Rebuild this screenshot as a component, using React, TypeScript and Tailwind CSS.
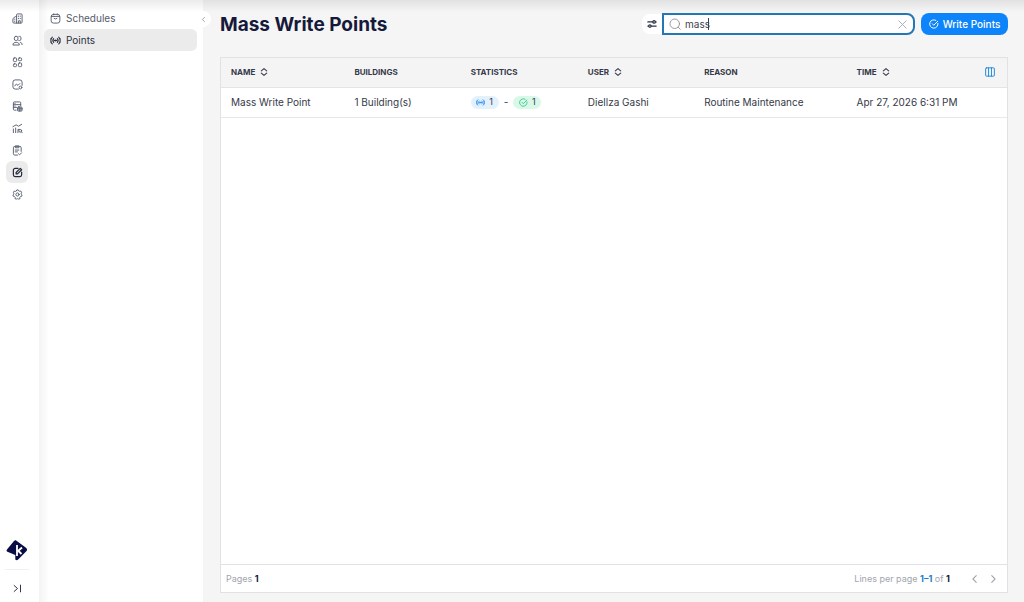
import { useState } from "react";
import type { ReactNode } from "react";

const Icon = ({
  children,
  className = "size-3",
  width = 1.8,
}: {
  children: ReactNode;
  className?: string;
  width?: number;
}) => (
  <svg
    viewBox="0 0 24 24"
    fill="none"
    stroke="currentColor"
    strokeWidth={width}
    strokeLinecap="round"
    strokeLinejoin="round"
    className={`shrink-0 ${className}`}
    aria-hidden="true"
  >
    {children}
  </svg>
);

const SignalIcon = ({ className }: { className?: string }) => (
  <Icon className={className} width={2.4}>
    <path d="M5 4.500a10.500 10.500 0 0 0 0 15M19 4.500a10.500 10.500 0 0 1 0 15M8 8a6 6 0 0 0 0 8M16 8a6 6 0 0 1 0 8M2 8v8M22 8v8" />
    <path d="M9 12h6" />
    <circle cx="12" cy="12" r="1.2" fill="currentColor" />
  </Icon>
);

const CheckIcon = ({ className }: { className?: string }) => (
  <Icon className={className} width={2.4}>
    <path d="M21.500 10.500A10 10 0 1 1 16.500 3.200" />
    <path d="m8 11.500 3.500 3.500L21 5.500" />
  </Icon>
);

const SortIcon = () => (
  <Icon className="size-2" width={3.4}>
    <path d="M4 8.500 12 2l8 6.500M4 15.500 12 22l8-6.500" />
  </Icon>
);

const navItems = [
  {
    label: "Buildings",
    icon: (
      <>
        <path d="M10 22V4a2 2 0 0 1 2-2h8a2 2 0 0 1 2 2v16a2 2 0 0 1-2 2H4a2 2 0 0 1-2-2v-7a2 2 0 0 1 1-1.700L7 8h3" />
        <path d="M14 6.500v1M18 6.500v1M14 11.500v1M18 11.500v1M6 13v1M6 17.500v1M14 22v-5h4v5" />
      </>
    ),
  },
  {
    label: "Users",
    icon: (
      <>
        <rect x="5" y="3" width="8" height="9" rx="3.500" />
        <path d="M15 3h1.500a3 3 0 0 1 3 3v3a3 3 0 0 1-3 3H15M2 21c0-3 3-5 7-5s7 2 7 5zM18 16c2.500.500 4 2 4 5" />
      </>
    ),
  },
  {
    label: "Equipment",
    icon: (
      <>
        <rect x="3" y="2" width="7" height="8" rx="2" />
        <rect x="14" y="2" width="7" height="6" rx="2" />
        <rect x="3" y="15" width="7" height="6" rx="2" />
        <rect x="14" y="13" width="7" height="8" rx="2" />
      </>
    ),
  },
  {
    label: "Analytics",
    icon: (
      <>
        <path d="M14 22H7a5 5 0 0 1-5-5V7a5 5 0 0 1 5-5h10a5 5 0 0 1 5 5v7" />
        <path d="m6 15 3.500-4 3.500 3 4-4" />
        <circle cx="18.500" cy="18.500" r="3" />
      </>
    ),
  },
  {
    label: "Data",
    icon: (
      <>
        <path d="M9 20H5a2 2 0 0 1-2-2V4a2 2 0 0 1 2-2h12a2 2 0 0 1 2 2v6M3 8h16M3 14h7M6 5h1M6 11h1" />
        <rect x="12" y="13" width="10" height="9" rx="2" fill="currentColor" fillOpacity="0.35" />
        <path d="M12 17h10M17 13v9" />
      </>
    ),
  },
  {
    label: "Reports",
    icon: (
      <>
        <path d="m2 8 7-4 5 3 7-4M3 13v8M8 11v10M13 21v-7h3" />
        <circle cx="18" cy="17" r="3" />
        <path d="m20.500 19.500 2 2" />
      </>
    ),
  },
  {
    label: "Tasks",
    icon: (
      <>
        <path d="M12 22H6a3 3 0 0 1-3-3V6a3 3 0 0 1 3-3h11a3 3 0 0 1 3 3v8M8 2h7v4H8zM7 11h8M7 15h5" />
        <path d="m14 19 2.500 2.500L21 17" />
      </>
    ),
  },
  {
    label: "Mass edit",
    active: true,
    icon: (
      <>
        <path d="M13 3H7a4 4 0 0 0-4 4v10a4 4 0 0 0 4 4h10a4 4 0 0 0 4-4v-6" />
        <path d="M9 15v-3l9-9 3 3-9 9z" />
      </>
    ),
  },
  {
    label: "Settings",
    icon: (
      <>
        <path d="m9.500 4 1-2h3l1 2 2.500 1 2.200-.500 1.800 2.700-1 2 .500 2.800 1.500 1-1 3-2.500.500-1.500 2 .500 2.500-3 1-2.500-1-2.500 1-3-1 .500-2.500-1.500-2L3 16l-1-3 1.500-1L4 9.200l-1-2 1.800-2.700L7 5z" />
        <circle cx="12" cy="12" r="3.500" />
      </>
    ),
  },
];

const columns = [
  { label: "Name", sortable: true, width: "w-[15.7%]" },
  { label: "Buildings", sortable: false, width: "w-[14.8%]" },
  { label: "Statistics", sortable: false, width: "w-[14.9%]" },
  { label: "User", sortable: true, width: "w-[14.8%]" },
  { label: "Reason", sortable: false, width: "w-[19.4%]" },
  { label: "Time", sortable: true, width: "w-[15.8%]" },
];

const rows = [
  {
    name: "Mass Write Point",
    buildings: "1 Building(s)",
    points: 1,
    success: 1,
    user: "Diellza Gashi",
    reason: "Routine Maintenance",
    time: "Apr 27, 2026 6:31 PM",
  },
];

const Rail = () => (
  <nav className="flex w-[39px] shrink-0 flex-col items-center bg-white pt-[7px] text-[#5b6173]">
    <div className="flex flex-col items-center">
      {navItems.map(({ label, icon, active }) => (
        <a
          key={label}
          href="#"
          aria-label={label}
          className={`mr-[5px] flex size-[22px] items-center justify-center rounded-md ${
            active ? "bg-[#ebebec] text-[#23283a]" : ""
          }`}
        >
          <Icon className="size-[11px]" width={active ? 2.6 : 2.1}>
            {icon}
          </Icon>
        </a>
      ))}
    </div>
    <div className="mt-auto mr-[5px] flex flex-col items-center">
      <svg viewBox="0 0 22 22" className="size-[22px]" aria-hidden="true">
        <path
          d="M9.800 1.200 20 8.800q2 1.700.300 3.500L12.200 20.600q-1.500 1.200-2.900 0V16L1.400 12.800q-1.600-1-.200-2.500L8 2q.800-1 1.800-.800Z"
          fill="#0a0d45"
        />
        <path d="M11 6v11" stroke="white" strokeWidth="1.800" />
        <path d="M11.500 12.500 16 8.500M12.500 12l3 3" stroke="white" strokeWidth="1.800" fill="none" />
      </svg>
      <hr className="mt-2 w-6 border-[#f0f0f0]" />
      <button aria-label="Expand menu" className="mt-3 mb-[7px] p-0.5 text-[#2c3040]">
        <Icon className="size-[9px]" width={2.6}>
          <path d="m3 4 9 8-9 8M20 3v18" />
        </Icon>
      </button>
    </div>
  </nav>
);

const SubMenu = () => (
  <aside className="relative w-[164px] shrink-0 bg-linear-to-r from-[#f3f3f3] to-white to-6% pt-[7px] pr-1.5 pl-[5px]">
    <a href="#" className="flex h-[22px] items-center gap-[5px] px-1.5 text-[10px] text-[#555b6c]">
      <Icon className="size-[11px]" width={2}>
        <rect x="2.500" y="3" width="19" height="19" rx="5" />
        <path d="M3 7.500h18M8 2v2M16 2v2M9 12q3 2.500 6 0" />
      </Icon>
      Schedules
    </a>
    <a
      href="#"
      className="flex h-[22px] items-center gap-[5px] rounded-md bg-[#ebebeb] px-1.5 text-[10px] text-[#2c3042]"
    >
      <SignalIcon className="size-[11px]" />
      Points
    </a>
    <button
      aria-label="Collapse menu"
      className="absolute top-[11px] -right-2 z-10 flex size-4 items-center justify-center rounded-full bg-white text-[#777c8a]"
    >
      <Icon className="size-[7px]" width={2.4}>
        <path d="m15 5-7 7 7 7" />
      </Icon>
    </button>
  </aside>
);

export default function App() {
  const [search, setSearch] = useState("mass");

  return (
    <div className="relative flex h-screen bg-[#f5f5f5] font-['Inter',sans-serif] text-[#353949]">
      <Rail />
      <SubMenu />

      <main className="flex min-w-0 flex-1 flex-col pt-3 pr-4 pb-[9px] pl-[17px]">
        <header className="flex h-6 items-center justify-between">
          <h1 className="pt-0.5 text-[19px] font-bold whitespace-nowrap text-[#15193a]">Mass Write Points</h1>
          <div className="flex items-center">
            <button
              aria-label="Filters"
              className="flex h-5 w-5 items-center justify-center rounded-l-lg bg-white text-[#2c3144]"
            >
              <Icon className="size-[10px]" width={2.8}>
                <path d="M2 7h12M20 7h2M2 17h2M10 17h12" />
                <circle cx="17" cy="7" r="3" />
                <circle cx="7" cy="17" r="3" />
              </Icon>
            </button>
            {/* search */}
            <div className="relative flex h-[22px] w-[253px] items-center gap-1 rounded-r-lg border-2 border-[#2476b4] bg-white px-[5px]">
              <Icon className="size-3 text-[#8d919c]" width={1.8}>
                <circle cx="11.500" cy="11.500" r="9.500" />
                <path d="m18.500 18.500 4 4" />
              </Icon>
              <input
                type="text"
                aria-label="Search"
                value={search}
                onChange={(e) => setSearch(e.target.value)}
                className="min-w-0 flex-1 bg-transparent text-[10px] text-[#3b3f4e] caret-transparent outline-none"
              />
              {search === "mass" && <span className="absolute left-11 h-3 w-px bg-[#3b3f4e]" />}
              <button aria-label="Clear search" onClick={() => setSearch("")} className="text-[#a4a7ae]">
                <Icon className="size-[11px]" width={2}>
                  <path d="m4 4 16 16M20 4 4 20" />
                </Icon>
              </button>
            </div>
            <button className="ml-1.5 flex h-[22px] w-[87px] items-center justify-center gap-1 rounded-lg bg-[#0d84fa] text-[10px] font-medium whitespace-nowrap text-white">
              <CheckIcon className="size-[10px]" />
              Write Points
            </button>
          </div>
        </header>

        <section className="mt-[21px] flex min-h-0 flex-1 flex-col border border-[#e2e2e4] bg-white">
          <table className="w-full table-fixed text-left text-[10px]">
            <thead>
              <tr className="h-[29px] border-b border-[#e4e4e6] bg-[#f4f4f4]">
                {columns.map(({ label, sortable, width }) => (
                  <th key={label} className={`pl-2.5 text-[8px] font-bold uppercase ${width}`}>
                    <span className="flex items-center gap-[5px]">
                      {label}
                      {sortable && (
                        <button aria-label={`Sort by ${label}`}>
                          <SortIcon />
                        </button>
                      )}
                    </span>
                  </th>
                ))}
                <th className="pr-3">
                  <button aria-label="Choose columns" className="ml-auto block text-[#1683dc]">
                    <Icon className="size-[10px]" width={2.2}>
                      <rect x="1.500" y="2" width="21" height="20" rx="2" />
                      <path d="M8.500 2v20M15.500 2v20" />
                    </Icon>
                  </button>
                </th>
              </tr>
            </thead>
            <tbody>
              {rows.map((row) => (
                <tr key={row.name} className="h-[30px] border-b border-[#e8e8ea] whitespace-nowrap">
                  <td className="pl-2.5">{row.name}</td>
                  <td className="pl-2.5">{row.buildings}</td>
                  <td className="pl-2.5">
                    <div className="flex items-center gap-[5px]">
                      <span className="flex h-[13px] w-7 items-center justify-center gap-1 rounded-full bg-[#e3f1fd] text-[9px]">
                        <SignalIcon className="size-[9px] text-[#3c97ec]" />
                        {row.points}
                      </span>
                      -
                      <span className="flex h-[13px] w-7 items-center justify-center gap-1 rounded-full bg-[#daf8ea] text-[9px]">
                        <CheckIcon className="size-[9px] text-[#35c889]" />
                        {row.success}
                      </span>
                    </div>
                  </td>
                  <td className="pl-2.5">{row.user}</td>
                  <td className="pl-2.5">{row.reason}</td>
                  <td className="pl-2.5">{row.time}</td>
                  <td />
                </tr>
              ))}
            </tbody>
          </table>

          {/* pagination */}
          <footer className="mt-auto flex h-7 items-center justify-between border-t border-[#e2e2e4] px-[5px] text-[9px] text-[#a2a5ad]">
            <p>
              Pages <b className="text-[#15193a]">1</b>
            </p>
            <div className="flex items-center">
              <p>
                Lines per page <b className="text-[#1b7fcb]">1–1</b> of <b className="text-[#15193a]">1</b>
              </p>
              <button aria-label="Previous page" className="ml-5">
                <Icon className="size-[10px]" width={2.6}>
                  <path d="m15 4-8 8 8 8" />
                </Icon>
              </button>
              <button aria-label="Next page" className="mr-1 ml-2">
                <Icon className="size-[10px]" width={2.6}>
                  <path d="m9 4 8 8-8 8" />
                </Icon>
              </button>
            </div>
          </footer>
        </section>
      </main>

      {/* shadow along the top edge */}
      <div className="pointer-events-none absolute inset-x-0 top-0 h-3 bg-linear-to-b from-black/8 to-transparent" />
    </div>
  );
}
